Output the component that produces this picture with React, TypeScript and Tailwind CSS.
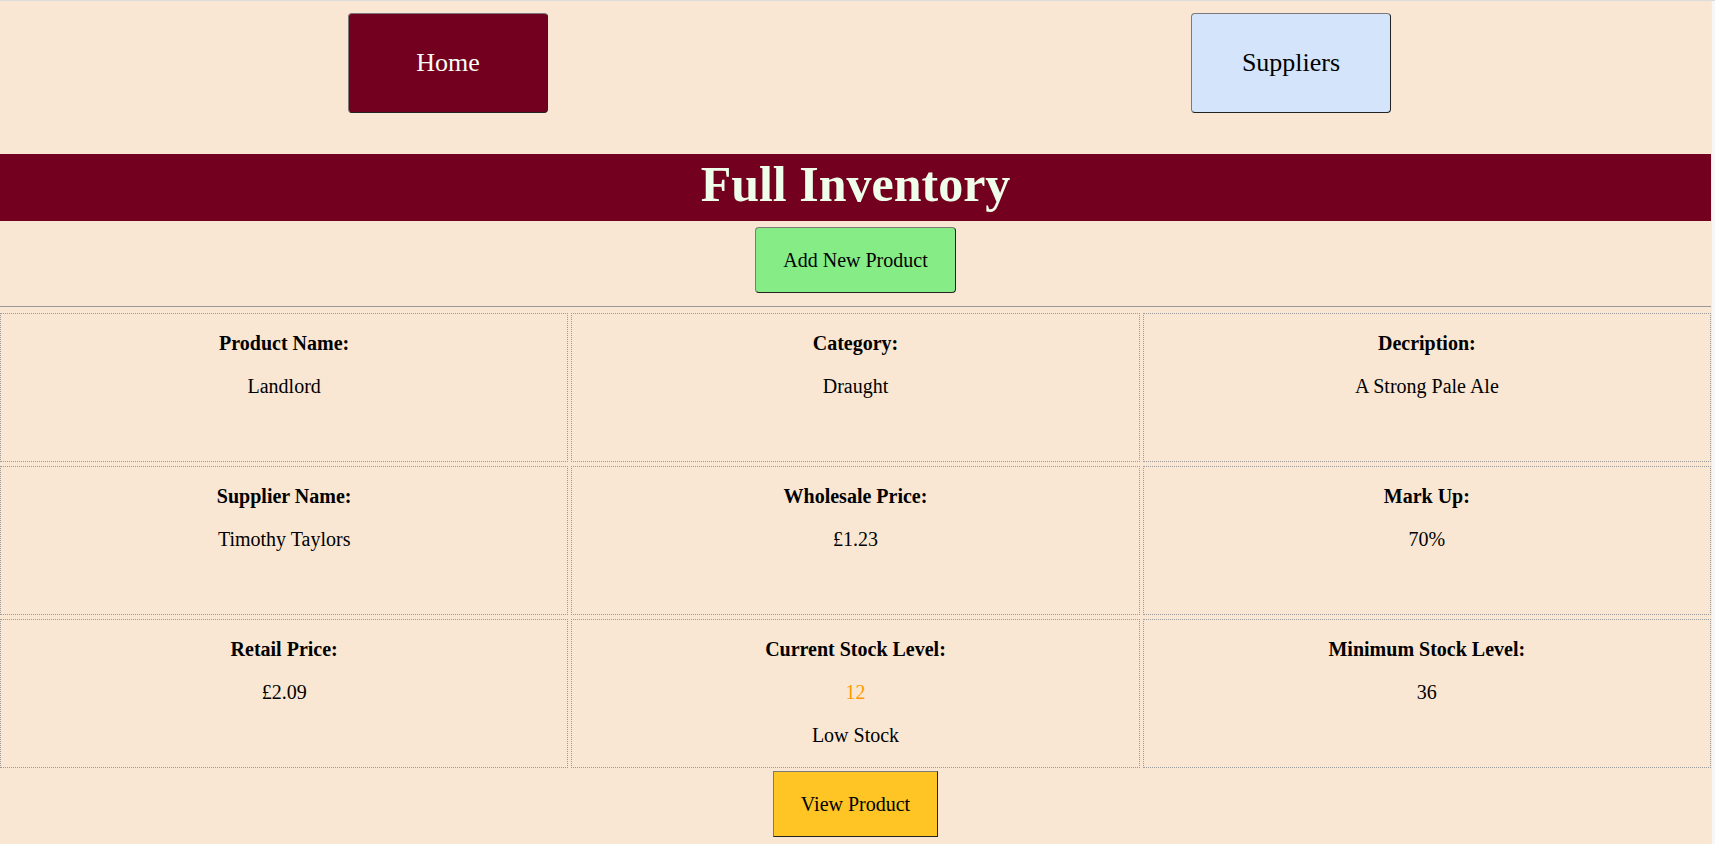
import React from "react";

const cells = [
  { label: "Product Name:", lines: ["Landlord"] },
  { label: "Category:", lines: ["Draught"] },
  { label: "Decription:", lines: ["A Strong Pale Ale"] },
  { label: "Supplier Name:", lines: ["Timothy Taylors"] },
  { label: "Wholesale Price:", lines: ["£1.23"] },
  { label: "Mark Up:", lines: ["70%"] },
  { label: "Retail Price:", lines: ["£2.09"] },
  { label: "Current Stock Level:", lines: ["12", "Low Stock"], warn: true },
  { label: "Minimum Stock Level:", lines: ["36"] },
];

const outset = "border border-t-[#7a7a7a] border-l-[#7a7a7a] border-r-[#222] border-b-[#222]";

export default function App() {
  return (
    <div className="h-[844px] w-full overflow-hidden flex border-t border-[#dcdcdc] bg-[#f9e7d3] text-black font-['Liberation_Serif',serif]">
      <div className="flex-1 flex flex-col">
        {/* nav */}
        <div className="flex pt-[12px] pl-[348px] gap-[643px]">
          <button className={`w-[200px] h-[100px] pb-[2px] rounded-[4px] bg-[#74001f] text-[#f3fff3] text-[26px] ${outset}`}>
            Home
          </button>
          <button className={`w-[200px] h-[100px] pb-[2px] rounded-[4px] bg-[#d4e5fb] text-black text-[26px] ${outset}`}>
            Suppliers
          </button>
        </div>

        {/* title bar */}
        <div className="mt-[41px] h-[67px] bg-[#74001f] flex items-center justify-center">
          <h1 className="text-[50px] leading-none font-bold text-[#eefeea] pb-[7px]">Full Inventory</h1>
        </div>

        <div className="flex justify-center mt-[6px]">
          <button className={`h-[66px] px-[27px] rounded-[4px] bg-[#86ec86] text-[20px] ${outset}`}>
            Add New Product
          </button>
        </div>

        <div className="mt-[13px] border-t border-[#999]" />

        {/* product grid */}
        <div className="mt-[6px] grid grid-cols-3 gap-x-[3px] gap-y-[4px]">
          {cells.map((c) => (
            <div
              key={c.label}
              className="h-[149px] border border-dotted border-[#9a9a9a] flex flex-col items-center pt-[18px] gap-[20px] text-[20px] leading-[23px]"
            >
              <p className="font-bold">{c.label}</p>
              {c.lines.map((l, i) => (
                <p key={i} className={c.warn && i === 0 ? "text-[#ff9a00]" : ""}>
                  {l}
                </p>
              ))}
            </div>
          ))}
        </div>

        <div className="flex justify-center mt-[3px]">
          <button className={`h-[66px] px-[27px] bg-[#ffc524] text-[20px] ${outset}`}>View Product</button>
        </div>
      </div>
      <div className="w-[4px] bg-[#f7f7f7] border-l border-[#ececec]" />
    </div>
  );
}
